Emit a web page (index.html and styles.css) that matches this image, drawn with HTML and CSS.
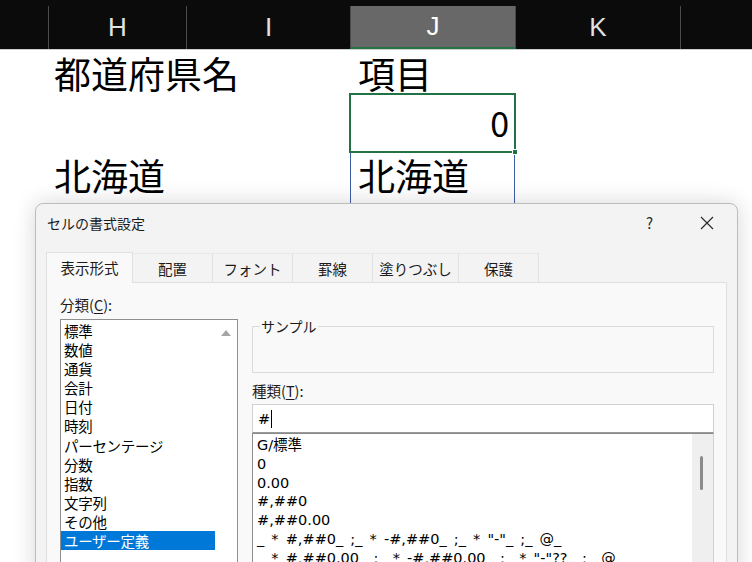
FILE: index.html
```html
<!DOCTYPE html>
<html lang="ja">
<head>
    <meta charset="UTF-8">
    <meta name="viewport" content="width=device-width, initial-scale=1.0">
    <title>セルの書式設定</title>
    <link rel="stylesheet" href="styles.css">
</head>
<body>
    <div class="sheet">
        <div class="head">
            <div class="hd w0"></div>
            <div class="hd wh">H</div>
            <div class="hd wi">I</div>
            <div class="hd wj active">J</div>
            <div class="hd wk">K</div>
            <div class="hd wl"></div>
        </div>
        <div class="row r1">
            <div class="cell w0"></div>
            <div class="cell wh">都道府県名</div>
            <div class="cell wi"></div>
            <div class="cell wj">項目</div>
            <div class="cell wk"></div>
        </div>
        <div class="row r2">
            <div class="cell w0"></div>
            <div class="cell wh"></div>
            <div class="cell wi"></div>
            <div class="cell wj selected"><span class="num">0</span><span class="handle"></span></div>
            <div class="cell wk"></div>
        </div>
        <div class="row r3">
            <div class="cell w0"></div>
            <div class="cell wh">北海道</div>
            <div class="cell wi"></div>
            <div class="cell wj copied">北海道</div>
            <div class="cell wk"></div>
        </div>
    </div>

    <div class="dialog">
        <div class="titlebar">
            <span class="title">セルの書式設定</span>
            <span class="help">?</span>
            <svg class="close" width="14" height="14" viewBox="0 0 14 14">
                <path d="M1 1 L13 13 M13 1 L1 13" stroke="#2b2b2b" stroke-width="1.2" fill="none"/>
            </svg>
        </div>

        <div class="tabs">
            <div class="tab active">表示形式</div>
            <div class="tab">配置</div>
            <div class="tab">フォント</div>
            <div class="tab">罫線</div>
            <div class="tab wide">塗りつぶし</div>
            <div class="tab">保護</div>
        </div>

        <div class="panel">
            <div class="left">
                <div class="label">分類(<u>C</u>):</div>
                <div class="catlist">
                    <div class="items">
                        <div class="item">標準</div>
                        <div class="item">数値</div>
                        <div class="item">通貨</div>
                        <div class="item">会計</div>
                        <div class="item">日付</div>
                        <div class="item">時刻</div>
                        <div class="item">パーセンテージ</div>
                        <div class="item">分数</div>
                        <div class="item">指数</div>
                        <div class="item">文字列</div>
                        <div class="item">その他</div>
                        <div class="item on">ユーザー定義</div>
                    </div>
                    <div class="vscroll">
                        <span class="uparrow"></span>
                    </div>
                </div>
            </div>

            <div class="right">
                <fieldset class="sample">
                    <legend>サンプル</legend>
                    <div class="sample-body"></div>
                </fieldset>
                <div class="label kind">種類(<u>T</u>):</div>
                <div class="fmt-input">#<span class="caret"></span></div>
                <div class="fmtlist">
                    <div class="fmt-items">
                        <div class="fmt">G/標準</div>
                        <div class="fmt">0</div>
                        <div class="fmt">0.00</div>
                        <div class="fmt">#,##0</div>
                        <div class="fmt">#,##0.00</div>
                        <div class="fmt">_ * #,##0_ ;_ * -#,##0_ ;_ * "-"_ ;_ @_ </div>
                        <div class="fmt">_ * #,##0.00_ ;_ * -#,##0.00_ ;_ * "-"??_ ;_ @_ </div>
                    </div>
                    <div class="fmt-scroll"><span class="thumb"></span></div>
                </div>
            </div>
        </div>
    </div>
</body>
</html>
```

FILE: styles.css
```css
* {
    box-sizing: border-box;
}
body {
    margin: 0;
    width: 752px;
    height: 562px;
    overflow: hidden;
    position: relative;
    background-color: #fff;
    font-family: "Noto Sans CJK JP", sans-serif;
    color: #000;
}

/* sheet behind the dialog */
.head {
    display: flex;
    height: 50px;
    padding-top: 6px;
    background-color: #0b0b0b;
    border-bottom: 1px solid #cfcfcf;
}
.hd {
    display: flex;
    align-items: center;
    justify-content: center;
    border-left: 1px solid #4a4a4a;
    color: #e2e2e2;
    font-family: "Liberation Sans", sans-serif;
    font-size: 26px;
}
.hd.w0 {
    border-left: none;
}
.hd.active {
    background-color: #686868;
    border-bottom: 2px solid #217346;
    color: #fff;
}
.w0 { width: 48px; }
.wh { width: 138px; }
.wi { width: 164px; }
.wj { width: 165px; }
.wk { width: 165px; }
.wl { flex: 1; }

.row {
    display: flex;
}
.r1 { height: 43px; }
.r2 { height: 60px; }
.r3 { height: 60px; }
.cell {
    font-size: 37px;
    line-height: 1;
    padding-left: 6px;
    white-space: nowrap;
}
.r1 .cell { padding-top: 5px; }
.r3 .cell { padding-top: 4px; }
.cell.wj { padding-left: 8px; }
.selected {
    position: relative;
    border: 2px solid #217346;
    margin-left: -1px;
    width: 167px;
    display: flex;
    align-items: center;
    justify-content: flex-end;
    padding-right: 5px;
}
.num {
    font-size: 34px;
}
.handle {
    position: absolute;
    right: -4px;
    bottom: -4px;
    width: 6px;
    height: 6px;
    background-color: #217346;
    border: 1px solid #fff;
}
.copied {
    border-left: 1px solid #3d5fa8;
    border-right: 1px solid #3d5fa8;
    padding-left: 7px !important;
}

/* format cells dialog */
.dialog {
    position: absolute;
    left: 35px;
    top: 203px;
    width: 703px;
    height: 380px;
    background-color: #f3f3f3;
    border: 1px solid #bcbcbc;
    border-radius: 8px 8px 0 0;
    box-shadow: 0 0 22px rgba(0, 0, 0, 0.16);
}
.titlebar {
    display: flex;
    align-items: center;
    height: 37px;
    padding-left: 11px;
    font-size: 14px;
    color: #1b1b1b;
}
.title {
    flex: 1;
}
.help {
    font-size: 15px;
    margin-right: 47px;
    color: #2b2b2b;
}
.close {
    margin-right: 23px;
}

.tabs {
    display: flex;
    align-items: flex-end;
    margin-top: 10px;
    margin-left: 10px;
    height: 31px;
}
.tab {
    width: 80px;
    height: 29px;
    display: flex;
    align-items: center;
    justify-content: center;
    font-size: 14.5px;
    color: #1b1b1b;
    border-right: 1px solid #e2e2e2;
    border-top: 1px solid #e8e8e8;
}
.tab.active {
    width: 87px;
    height: 31px;
    background-color: #f9f9f9;
    border: 1px solid #e0e0e0;
    border-bottom: none;
    margin-bottom: -1px;
    position: relative;
    z-index: 1;
    padding-bottom: 2px;
}
.tab.wide {
    width: 86px;
}

.panel {
    display: flex;
    gap: 14px;
    margin-left: 10px;
    width: 681px;
    height: 300px;
    padding: 12px 0 0 13px;
    background-color: #f9f9f9;
    border: 1px solid #dfdfdf;
}
.label {
    font-size: 14.5px;
    line-height: 20px;
    color: #1b1b1b;
}
.label u {
    text-underline-offset: 2px;
}
.left {
    width: 178px;
}
.catlist {
    display: flex;
    margin-top: 4px;
    height: 260px;
    background-color: #fff;
    border: 1px solid #8f8f8f;
}
.items {
    width: 154px;
    padding-top: 1px;
}
.item {
    font-size: 14.5px;
    line-height: 19.1px;
    padding-left: 3px;
    white-space: nowrap;
    letter-spacing: -0.3px;
}
.item.on {
    background-color: #0078d7;
    color: #fff;
}
.vscroll {
    flex: 1;
    display: flex;
    justify-content: center;
    padding-top: 10px;
}
.uparrow {
    width: 0;
    height: 0;
    border-left: 5px solid transparent;
    border-right: 5px solid transparent;
    border-bottom: 6px solid #a6a6a6;
}

.right {
    width: 462px;
    padding-top: 22px;
}
.sample {
    margin: 0;
    padding: 0;
    border: 1px solid #dadada;
}
.sample legend {
    margin-left: 7px;
    padding: 0 1px;
    font-size: 14px;
    line-height: 18px;
    color: #1b1b1b;
}
.sample-body {
    height: 37px;
}
.kind {
    margin-top: 8px;
}
.fmt-input {
    display: flex;
    align-items: center;
    margin-top: 3px;
    height: 29px;
    padding-left: 5px;
    background-color: #fff;
    border: 1px solid #d0d0d0;
    border-bottom: 1px solid #9a9a9a;
    font-family: "DejaVu Sans", "Noto Sans CJK JP", sans-serif;
    font-size: 14.5px;
}
.caret {
    width: 1px;
    height: 18px;
    margin-left: 1px;
    background-color: #000;
}
.fmtlist {
    display: flex;
    height: 140px;
    background-color: #fff;
    border-left: 1px solid #8f8f8f;
    border-top: 1px solid #8a8a8a;
    border-right: 1px solid #d0d0d0;
}
.fmt-items {
    flex: 1;
    min-width: 0;
    overflow: hidden;
    padding: 2px 0 0 4px;
}
.fmt {
    font-family: "DejaVu Sans", "Noto Sans CJK JP", sans-serif;
    font-size: 14.5px;
    line-height: 18.8px;
    white-space: pre;
    word-spacing: 2.5px;
}
.fmt-scroll {
    width: 21px;
    background-color: #efefef;
    padding: 22px 0 0 8px;
}
.thumb {
    display: block;
    width: 3px;
    height: 34px;
    border-radius: 2px;
    background-color: #8b8b8b;
}
```
